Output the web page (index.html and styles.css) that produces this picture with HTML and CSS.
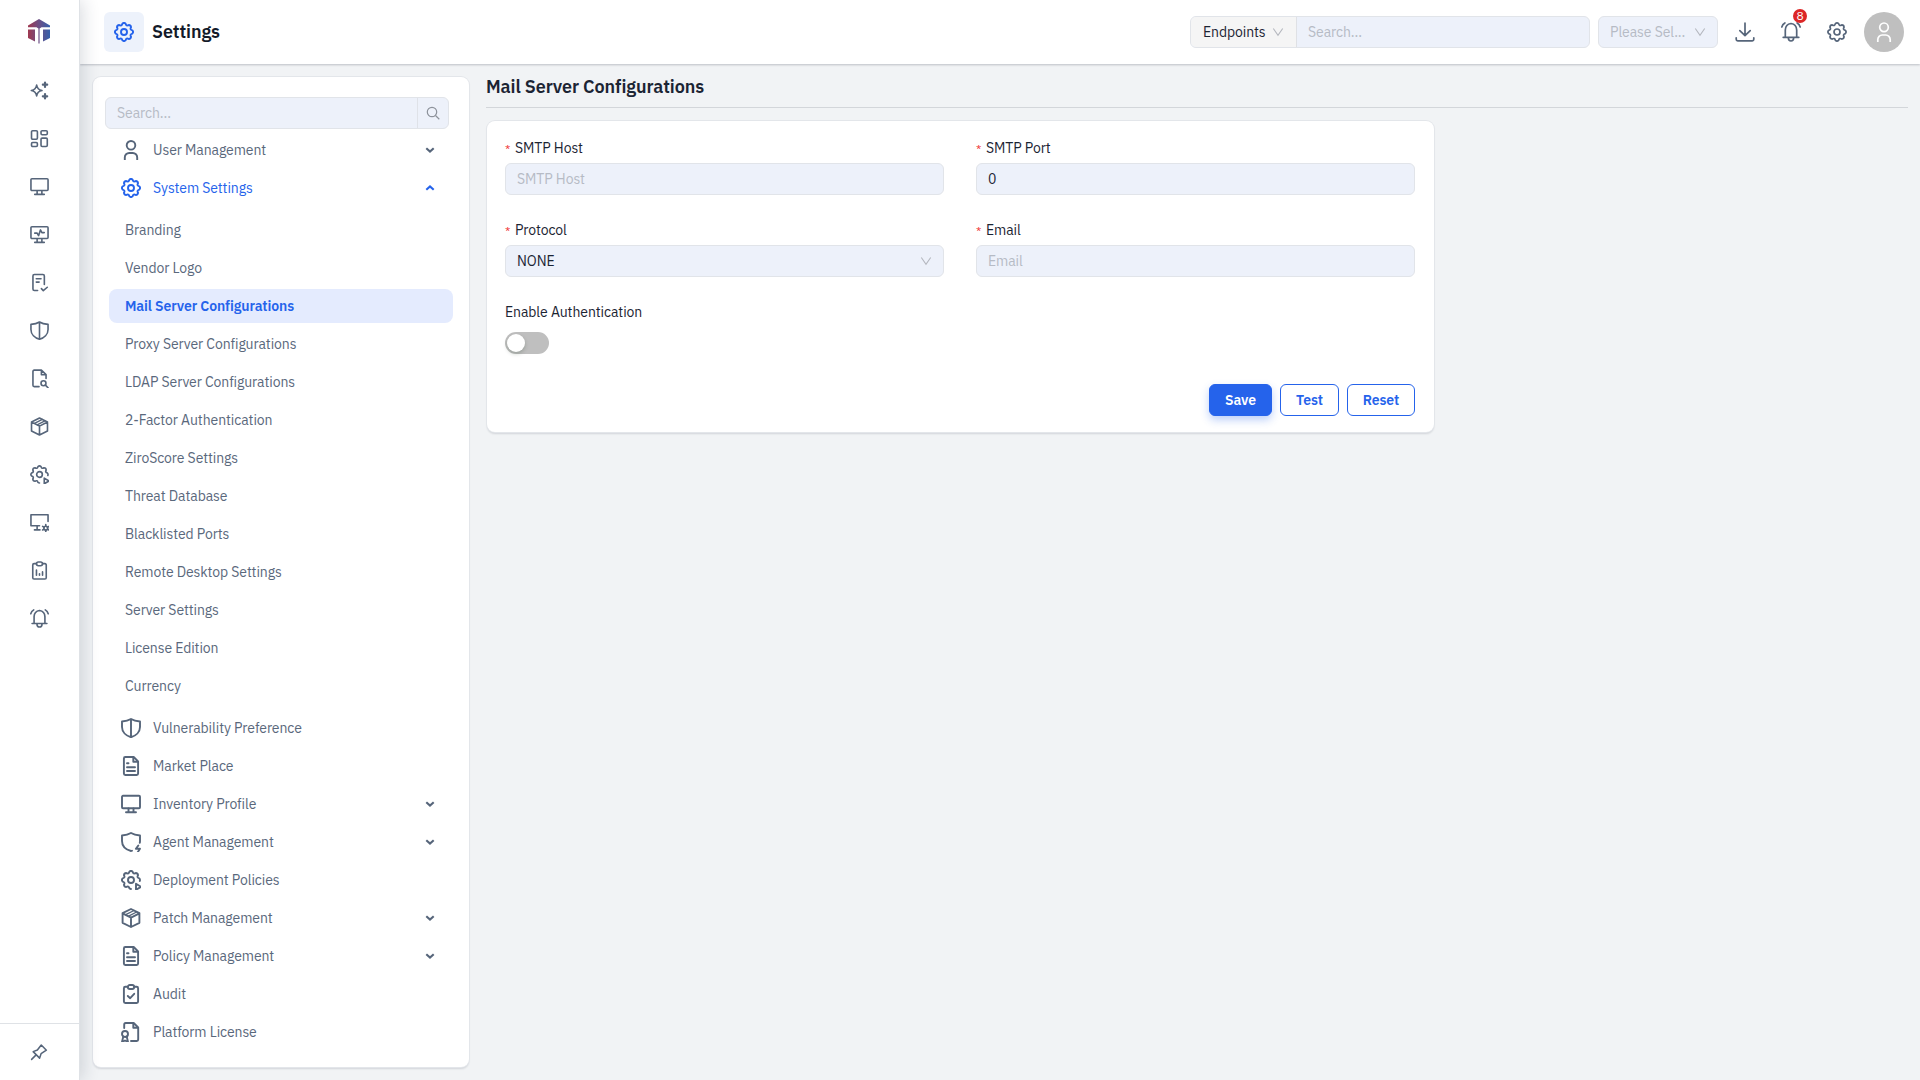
FILE: index.html
```
<!DOCTYPE html>
<html lang="en">
<head>
<meta charset="utf-8">
<title>Settings</title>
<link rel="stylesheet" href="styles.css">
</head>
<body>
<svg class="sprite" aria-hidden="true">
  <defs>
    <linearGradient id="brand" gradientUnits="userSpaceOnUse" x1="0" y1="0" x2="22" y2="0">
      <stop offset="0" stop-color="#a0384f"/><stop offset=".5" stop-color="#6b4f86"/><stop offset="1" stop-color="#3560ab"/>
    </linearGradient>
  </defs>
  <symbol id="gear" viewBox="0 0 20 20"><path d="M8.38 1.66Q10 .2 11.62 1.66Q12.3 4.46 14.75 2.95Q16.93 3.07 17.05 5.25Q15.54 7.7 18.34 8.38Q19.8 10 18.34 11.62Q15.54 12.3 17.05 14.75Q16.93 16.93 14.75 17.05Q12.3 15.54 11.62 18.34Q10 19.8 8.38 18.34Q7.7 15.54 5.25 17.05Q3.07 16.93 2.95 14.75Q4.46 12.3 1.66 11.62Q.2 10 1.66 8.38Q4.46 7.7 2.95 5.25Q3.07 3.07 5.25 2.95Q7.7 4.46 8.38 1.66Z"/><circle cx="10" cy="10" r="3"/></symbol>
  <symbol id="gear-play" viewBox="0 0 20 20"><path d="M10 19Q9.2 19 8.38 18.34Q7.7 15.54 5.25 17.05Q3.07 16.93 2.95 14.75Q4.46 12.3 1.66 11.62Q.2 10 1.66 8.38Q4.46 7.7 2.95 5.25Q3.07 3.07 5.25 2.95Q7.7 4.46 8.38 1.66Q10 .2 11.62 1.66Q12.3 4.46 14.75 2.95Q16.93 3.07 17.05 5.25Q15.54 7.7 18.34 8.38Q19.3 9.3 18.8 11"/><circle cx="10" cy="10" r="3"/><path d="M15 13.800L20 16.800L15 19.800Z"/></symbol>
  <symbol id="user" viewBox="0 0 20 20"><circle cx="10" cy="5.3" r="4.3"/><path d="M3.8 20v-2.6a4.4 4.4 0 0 1 4.4-4.4h3.6a4.4 4.4 0 0 1 4.4 4.4V20"/></symbol>
  <symbol id="shield" viewBox="0 0 20 20"><path d="M10 1C7.5 2.6 4.5 3.3 1 3.500V9c0 5 4 8.800 9 10.200C15 17.800 19 14 19 9V3.500C15.500 3.300 12.500 2.600 10 1ZM10 1v18"/></symbol>
  <symbol id="shield-bolt" viewBox="0 0 20 20"><path d="M11 18.700Q10.500 19 10 19C5 17.600 1 14 1 9V3.500C4.500 3.300 7.500 2.600 10 1C12.500 2.600 15.500 3.300 19 3.500V9q0 1-.2 1.800"/><path d="M17.300 13.500L14.900 16.800H19L16.700 20.200"/></symbol>
  <symbol id="doc" viewBox="0 0 20 20"><path d="M12.700 1H4.300Q2.900 1 2.900 2.400V17.600Q2.900 19 4.300 19H15.700Q17.100 19 17.100 17.600V5.400ZM12.300 1V5.700H17M6 7.200H7.500M6 11.200H14M6 15H14"/></symbol>
  <symbol id="monitor" viewBox="0 0 20 20"><rect x="1" y="1.800" width="18" height="12.400" rx="1"/><path d="M7.500 14.500V18M12.500 14.500V18M5 18.300H15"/></symbol>
  <symbol id="monitor-pulse" viewBox="0 0 20 20"><rect x="1" y="1.800" width="18" height="12.400" rx="1"/><path d="M7.500 14.500V18M12.500 14.500V18M5 18.300H15M5 8.600H7.500L9 11.200L11 5.200L12.500 8H15"/></symbol>
  <symbol id="monitor-gear" viewBox="0 0 20 20"><path d="M10 13.400H1V1.800H19V9M7.500 13.500V17.500M4.700 17.800H10.500"/><circle cx="16.600" cy="16" r="2"/><path d="M16.600 12.200v1.800M16.600 18v1.800M13.300 14.100l1.500.9M18.400 17l1.500.9M13.300 17.900l1.500-.9M18.400 15l1.500-.9"/></symbol>
  <symbol id="box" viewBox="0 0 20 20"><path d="M10 1L18.400 5.200V14.800L10 19L1.600 14.800V5.200ZM1.600 5.300L10 9.600L18.400 5.300M10 9.600V19"/><path d="M4.800 6.700L13 2.500M7.600 8.200L15.600 4" stroke-width="1.400"/></symbol>
  <symbol id="clip-check" viewBox="0 0 20 20"><path d="M6.800 2.800H4.300Q2.900 2.800 2.900 4.200V17.600Q2.900 19 4.300 19H15.700Q17.100 19 17.100 17.600V4.200Q17.100 2.800 15.700 2.800H13.200"/><rect x="6.800" y="1" width="6.400" height="4" rx="2"/><path d="M6.800 12L9.200 14.200L13.200 9.800"/></symbol>
  <symbol id="clip-chart" viewBox="0 0 20 20"><path d="M6.800 2.800H4.300Q2.900 2.800 2.900 4.200V17.600Q2.900 19 4.300 19H15.700Q17.100 19 17.100 17.600V4.200Q17.100 2.800 15.700 2.800H13.200"/><rect x="6.800" y="1" width="6.400" height="4" rx="2"/><path d="M6.800 9.500V15M10 13.500V15M13.200 11.500V15"/></symbol>
  <symbol id="license" viewBox="0 0 20 20"><path d="M3.200 6V2.400Q3.200 1 4.600 1H12.700L17.200 5.500V17.600Q17.200 19 15.800 19H10M12.300 1V5.800H17"/><circle cx="4" cy="12" r="3"/><path d="M2.300 14.500L1 20L4 18.500L7 20L5.700 14.500"/></symbol>
  <symbol id="sparkle" viewBox="0 0 20 20"><path d="M7 4.200Q7.700 9.100 12.600 10Q7.700 10.900 7 15.800Q6.300 10.900 1.400 10Q6.300 9.100 7 4.200Z"/><path d="M15.800 1.600V6.200M13.500 3.900H18.100M15.800 13.800V18.400M13.500 16.100H18.100" stroke-width="2.300"/></symbol>
  <symbol id="grid" viewBox="0 0 20 20"><rect x="1.600" y="1.800" width="6.200" height="9" rx="1.200"/><rect x="11.600" y="1.800" width="6.600" height="4.200" rx="1.200"/><rect x="11.600" y="9.600" width="6.600" height="8.800" rx="1.200"/><rect x="1.600" y="14.200" width="6.200" height="4.200" rx="1.200"/></symbol>
  <symbol id="doc-check" viewBox="0 0 20 20"><path d="M8 18.400H4.600Q3.100 18.400 3.100 16.900V3.100Q3.100 1.600 4.600 1.600H13.600Q15.100 1.600 15.100 3.100V12M6.600 6H11.600M6.600 9.600H9.600M12 16.500L14 18.600L18.200 15"/></symbol>
  <symbol id="doc-search" viewBox="0 0 20 20"><path d="M9.500 18.600H4.400Q3.100 18.600 3.100 17.200V2.500Q3.100 1.200 4.400 1.200H12L16.900 6V10M12 1.200V6H16.900"/><circle cx="14.200" cy="15" r="2.600"/><path d="M16.200 17L19 19.800"/></symbol>
  <symbol id="bell" viewBox="0 0 20 20"><path d="M2.200 15.300H17.800M4.300 15V8Q4.500 2.300 10 1.500Q15.500 2.300 15.700 8V15M7.300 15.700Q7.400 19 10 19Q12.600 19 12.700 15.700M.8 5Q1.500 2.200 3.900 .9M19.200 5Q18.500 2.200 16.100 .9"/></symbol>
  <symbol id="download" viewBox="0 0 20 20"><path d="M10 1.200V13.500M4.800 8.600L10 13.700L15.200 8.600M1.200 15.800V17.300Q1.200 18.800 2.700 18.800H17.300Q18.800 18.800 18.800 17.300V15.800"/></symbol>
  <symbol id="pin" viewBox="0 0 20 20"><path d="M1.800 18.200L6.500 13.500M3.500 9.600L10.700 16.800L12.300 11.900L18.200 8L12.500 2.200L8.200 7.800Z"/></symbol>
  <symbol id="chev" viewBox="0 0 10 10"><path d="M1.300 3.300L5 6.600L8.700 3.300"/></symbol>
  <symbol id="vee" viewBox="0 0 12 12"><path d="M1.300 2.500L6 9.200L10.700 2.500"/></symbol>
  <symbol id="search" viewBox="0 0 14 14"><circle cx="6" cy="6" r="4.700"/><path d="M9.500 9.500L13.300 13.200"/></symbol>
</svg>

<div class="app">
  <aside class="rail">
    <div class="brand">
      <svg width="22" height="25" viewBox="0 0 22 25"><g fill="url(#brand)"><path d="M11 0L22 6.600V8.200H13.500L11.600 9.500V24.500H10.400V9.500L8.500 8.200H0V6.600Z"/><path d="M0 10.500H7V22.500L0 18.900Z"/><path d="M15 10.500H22V18.900L15 22.500Z"/></g></svg>
    </div>
    <nav class="rail-nav">
      <a><svg class="ico"><use href="#sparkle"/></svg></a>
      <a><svg class="ico"><use href="#grid"/></svg></a>
      <a><svg class="ico"><use href="#monitor"/></svg></a>
      <a><svg class="ico"><use href="#monitor-pulse"/></svg></a>
      <a><svg class="ico"><use href="#doc-check"/></svg></a>
      <a><svg class="ico"><use href="#shield"/></svg></a>
      <a><svg class="ico"><use href="#doc-search"/></svg></a>
      <a><svg class="ico"><use href="#box"/></svg></a>
      <a><svg class="ico"><use href="#gear-play"/></svg></a>
      <a><svg class="ico"><use href="#monitor-gear"/></svg></a>
      <a><svg class="ico"><use href="#clip-chart"/></svg></a>
      <a><svg class="ico"><use href="#bell"/></svg></a>
    </nav>
    <div class="rail-pin"><svg class="ico"><use href="#pin"/></svg></div>
  </aside>

  <div class="body">
    <header class="topbar">
      <div class="title-icon"><svg class="ico"><use href="#gear"/></svg></div>
      <h1 class="title">Settings</h1>
      <div class="tools">
        <div class="global-search">
          <div class="scope"><span>Endpoints</span><svg class="vee"><use href="#vee"/></svg></div>
          <div class="query">Search...</div>
        </div>
        <div class="picker"><span>Please Sel...</span><svg class="vee"><use href="#vee"/></svg></div>
        <svg class="ico tool download"><use href="#download"/></svg>
        <div class="tool alerts"><svg class="ico"><use href="#bell"/></svg><span class="badge">8</span></div>
        <svg class="ico tool"><use href="#gear"/></svg>
        <div class="avatar"><svg class="ico"><use href="#user"/></svg></div>
      </div>
    </header>

    <div class="content">
      <section class="panel menu">
        <div class="menu-search"><span>Search...</span><i><svg class="glass"><use href="#search"/></svg></i></div>
        <div class="row"><svg class="ico"><use href="#user"/></svg><span>User Management</span><svg class="chev"><use href="#chev"/></svg></div>
        <div class="row open"><svg class="ico"><use href="#gear"/></svg><span>System Settings</span><svg class="chev"><use href="#chev"/></svg></div>
        <div class="sub">
          <a>Branding</a>
          <a>Vendor Logo</a>
          <a class="active">Mail Server Configurations</a>
          <a>Proxy Server Configurations</a>
          <a>LDAP Server Configurations</a>
          <a>2-Factor Authentication</a>
          <a>ZiroScore Settings</a>
          <a>Threat Database</a>
          <a>Blacklisted Ports</a>
          <a>Remote Desktop Settings</a>
          <a>Server Settings</a>
          <a>License Edition</a>
          <a>Currency</a>
        </div>
        <div class="row"><svg class="ico"><use href="#shield"/></svg><span>Vulnerability Preference</span></div>
        <div class="row"><svg class="ico"><use href="#doc"/></svg><span>Market Place</span></div>
        <div class="row"><svg class="ico"><use href="#monitor"/></svg><span>Inventory Profile</span><svg class="chev"><use href="#chev"/></svg></div>
        <div class="row"><svg class="ico"><use href="#shield-bolt"/></svg><span>Agent Management</span><svg class="chev"><use href="#chev"/></svg></div>
        <div class="row"><svg class="ico"><use href="#gear-play"/></svg><span>Deployment Policies</span></div>
        <div class="row"><svg class="ico"><use href="#box"/></svg><span>Patch Management</span><svg class="chev"><use href="#chev"/></svg></div>
        <div class="row"><svg class="ico"><use href="#doc"/></svg><span>Policy Management</span><svg class="chev"><use href="#chev"/></svg></div>
        <div class="row"><svg class="ico"><use href="#clip-check"/></svg><span>Audit</span></div>
        <div class="row"><svg class="ico"><use href="#license"/></svg><span>Platform License</span></div>
      </section>

      <main class="main">
        <h2 class="heading">Mail Server Configurations</h2>
        <form class="panel form">
          <div class="fields">
            <div class="field"><label><b>*</b>SMTP Host</label><div class="input hint">SMTP Host</div></div>
            <div class="field"><label><b>*</b>SMTP Port</label><div class="input">0</div></div>
            <div class="field"><label><b>*</b>Protocol</label><div class="input"><span>NONE</span><svg class="vee"><use href="#vee"/></svg></div></div>
            <div class="field"><label><b>*</b>Email</label><div class="input hint">Email</div></div>
            <div class="field"><label>Enable Authentication</label><div class="switch"></div></div>
          </div>
          <div class="actions">
            <button type="button" class="btn primary">Save</button>
            <button type="button" class="btn test">Test</button>
            <button type="button" class="btn">Reset</button>
          </div>
        </form>
      </main>
    </div>
  </div>
</div>
</body>
</html>
```
FILE: styles.css
```
* { box-sizing: border-box; }
body {
  margin: 0;
  font: 14px/22px "IBM Plex Sans", Roboto, sans-serif;
  letter-spacing: -.09px;
  color: #1b2433;
  background: #f1f3f5;
}
.sprite { position: absolute; width: 0; height: 0; }
.ico {
  width: 20px; height: 20px; flex: none;
  fill: none; stroke: currentColor; stroke-width: 1.9;
  stroke-linecap: round; stroke-linejoin: round;
  overflow: visible;
}
.app { display: flex; height: 1080px; overflow: hidden; }

/* Icon rail */
.rail {
  width: 80px; flex: none; display: flex; flex-direction: column;
  background: #fff; border-right: 1px solid #dfe2e6;
  box-shadow: 3px 0 16px rgba(30, 41, 70, .16);
  position: relative; z-index: 2;
  color: #56657a;
}
.rail .ico { width: 19px; height: 19px; stroke-width: 1.7; }
.brand { height: 66px; display: flex; justify-content: center; padding: 19px 1px 0 0; }
.rail-nav { flex: 1; }
.rail-nav a { height: 48px; display: flex; align-items: center; justify-content: center; padding-right: 1px; }
.rail-pin { height: 57px; border-top: 1px solid #dfe2e6; display: flex; align-items: center; justify-content: center; padding-right: 1px; }
.rail .rail-pin .ico { width: 18px; height: 18px; }

/* Top bar */
.body { flex: 1; display: flex; flex-direction: column; min-width: 0; }
.topbar {
  height: 64px; flex: none; display: flex; align-items: center;
  padding: 0 16px 0 24px; background: #fff;
  box-shadow: 0 1px 2px rgba(20, 30, 50, .24);
  position: relative; z-index: 1;
}
.title-icon {
  width: 40px; height: 40px; border-radius: 6px; background: #edf2fb; color: #2563eb;
  display: flex; align-items: center; justify-content: center;
}
.title { margin: 0 0 0 8px; font-size: 18px; font-weight: 600; color: #131a29; }
.tools { margin-left: auto; display: flex; align-items: center; }
.global-search, .picker, .input, .menu-search {
  height: 32px; display: flex; align-items: center;
  background: #edf1fa; border: 1px solid #e1e4e9; border-radius: 6px;
}
.global-search { width: 400px; }
.scope {
  width: 106px; height: 30px; display: flex; align-items: center; justify-content: space-between;
  padding: 0 12px; background: #f5f5f5; border-right: 1px solid #dfe1e5; border-radius: 5px 0 0 5px;
}
.query { padding-left: 11px; color: #b6bbc5; }
.picker { width: 120px; margin-left: 8px; padding: 0 11px; justify-content: space-between; color: #b6bbc5; }
.vee { width: 12px; height: 12px; fill: none; stroke: #b4b7be; stroke-width: 1.1; }
.tool { color: #56657a; margin-right: 26px; stroke-width: 1.7; }
.download { margin-left: 17px; }
.alerts { position: relative; height: 20px; display: flex; }
.alerts .ico { stroke-width: 1.7; }
.badge {
  position: absolute; left: 12px; top: -13px; width: 14px; height: 14px; border-radius: 50%;
  background: #dc2626; color: #fff; font-size: 12px; line-height: 14px; text-align: center;
}
.avatar {
  width: 40px; height: 40px; margin-left: -9px; border-radius: 50%; background: #bfbfbf; color: #fff;
  display: flex; align-items: center; justify-content: center;
}
.avatar .ico { stroke-width: 1.7; }

/* Page body */
.content { flex: 1; display: flex; min-height: 0; padding: 13px 12px 13px 13px; }
.panel {
  background: #fff; border-radius: 8px;
  box-shadow: 0 0 0 1px #e3e6ea, 0 2px 2px rgba(20, 30, 50, .14);
}
.menu { width: 376px; flex: none; padding: 20px 16px 0 12px; color: #5a687c; }
.menu-search { width: 344px; color: #b6bbc5; padding-left: 11px; margin-bottom: 2px; }
.menu-search i {
  margin-left: auto; width: 31px; height: 30px; border-left: 1px solid #dfe2e8;
  display: flex; align-items: center; justify-content: center;
}
.glass { width: 14px; height: 14px; fill: none; stroke: #8d929b; stroke-width: 1.2; }
.row { height: 38px; margin-left: 16px; padding-right: 18px; display: flex; align-items: center; }
.row span { margin-left: 12px; }
.row .ico { color: #56657a; }
.row .chev { margin-left: auto; }
.chev { width: 10px; height: 10px; fill: none; stroke: #56657a; stroke-width: 2.1; }
.row.open, .row.open .ico { color: #2563eb; }
.row.open .chev { stroke: #2563eb; transform: rotate(180deg); }
.sub { padding: 4px 0; }
.sub a {
  display: block; width: 344px; height: 34px; line-height: 34px;
  margin: 2px 0 4px 4px; padding-left: 16px; border-radius: 8px;
}
.sub a + a { margin-top: 4px; }
.sub a:last-child { margin-bottom: 2px; }
.sub .active { background: #e4ebfe; color: #2563eb; font-weight: 600; }

.main { flex: 1; margin-left: 17px; }
.heading {
  margin: 0; height: 31px; border-bottom: 1px solid #d3d6da;
  font-size: 18px; line-height: 20px; font-weight: 600; color: #1b2433;
}
.form { width: 947px; height: 311px; margin: 13px 0 0 1px; padding: 16px 19px 16px 18px; }
.fields { display: grid; grid-template-columns: 439px 439px; column-gap: 32px; }
.field { height: 82px; }
.field label { display: block; height: 26px; line-height: 23px; }
.field b { color: #ef3b3b; font-weight: 400; font-size: 12px; line-height: 1; display: inline-block; width: 10px; }
.input { padding: 0 11px; justify-content: space-between; }
.hint { color: #b6bbc5; }
.switch { width: 44px; height: 22px; margin-top: 5px; border-radius: 11px; background: #bfbfbf; padding: 2px; }
.switch::before {
  content: ""; display: block; width: 18px; height: 18px; border-radius: 50%;
  background: #fff; box-shadow: 0 2px 4px rgba(0, 35, 11, .2);
}
.actions { display: flex; justify-content: flex-end; gap: 8px; margin-top: 1px; }
.btn {
  width: 68px; height: 32px; padding: 0; border: 1px solid #2563eb; border-radius: 6px;
  background: #fff; color: #2563eb; font: 600 14px "IBM Plex Sans", Roboto, sans-serif; letter-spacing: -.09px;
}
.btn.test { width: 59px; }
.btn.primary { width: 63px; background: #2563eb; color: #fff; box-shadow: 0 4px 8px rgba(37, 99, 235, .3); }
```
